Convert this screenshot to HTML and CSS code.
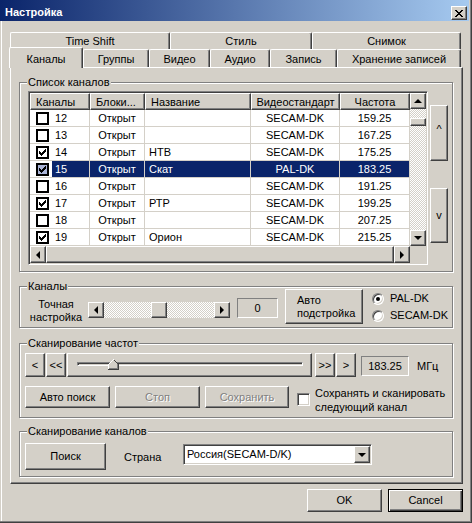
FILE: index.html
```html
<!DOCTYPE html>
<html lang="ru">
<head>
<meta charset="utf-8">
<title>Настройка</title>
<link rel="stylesheet" href="styles.css">
</head>
<body>
<div class="window">
  <div class="titlebar">
    <span class="title">Настройка</span>
    <span class="btn close"><svg width="8" height="7" viewBox="0 0 8 7" shape-rendering="crispEdges"><path d="M0 0h2v1H0zM6 0h2v1H6zM1 1h2v1H1zM5 1h2v1H5zM2 2h4v1H2zM3 3h2v1H3zM2 4h4v1H2zM1 5h2v1H1zM5 5h2v1H5zM0 6h2v1H0zM6 6h2v1H6z" fill="#000"/></svg></span>
  </div>

  <div class="tabs">
    <div class="tabrow back">
      <div class="tab t-ts">Time Shift</div>
      <div class="tab t-st">Стиль</div>
      <div class="tab t-sn">Снимок</div>
    </div>
    <div class="tabrow front">
      <div class="tab sel t-ch">Каналы</div>
      <div class="tab t-gr">Группы</div>
      <div class="tab t-vi">Видео</div>
      <div class="tab t-au">Аудио</div>
      <div class="tab t-za">Запись</div>
      <div class="tab t-hr">Хранение записей</div>
    </div>
  </div>

  <div class="panel">
    <div class="group g1">
      <div class="legend">Список каналов</div>
      <div class="g1row">
        <div class="list">
          <div class="list-in">
            <div class="table">
              <div class="thead">
                <div class="th">Каналы</div>
                <div class="th">Блоки...</div>
                <div class="th">Название</div>
                <div class="th ctr">Видеостандарт</div>
                <div class="th ctr">Частота</div>
              </div>
              <div class="tr"><div class="td c1"><span class="cb"></span><span class="num">12</span></div><div class="td ctr">Открыт</div><div class="td"></div><div class="td ctr">SECAM-DK</div><div class="td ctr">159.25</div></div>
              <div class="tr"><div class="td c1"><span class="cb"></span><span class="num">13</span></div><div class="td ctr">Открыт</div><div class="td"></div><div class="td ctr">SECAM-DK</div><div class="td ctr">167.25</div></div>
              <div class="tr"><div class="td c1"><span class="cb"><svg width="9" height="9" viewBox="0 0 9 9" shape-rendering="crispEdges"><path d="M7 1h1v1H7zM6 2h2v1H6zM1 3h1v1H1zM5 3h3v1H5zM1 4h2v1H1zM4 4h3v1H4zM1 5h5v1H1zM2 6h3v1H2zM3 7h1v1H3z" fill="#000"/></svg></span><span class="num">14</span></div><div class="td ctr">Открыт</div><div class="td">НТВ</div><div class="td ctr">SECAM-DK</div><div class="td ctr">175.25</div></div>
              <div class="tr sel"><div class="td c1"><span class="cb"><svg width="9" height="9" viewBox="0 0 9 9" shape-rendering="crispEdges"><path d="M7 1h1v1H7zM6 2h2v1H6zM1 3h1v1H1zM5 3h3v1H5zM1 4h2v1H1zM4 4h3v1H4zM1 5h5v1H1zM2 6h3v1H2zM3 7h1v1H3z" fill="#000"/></svg></span><span class="num">15</span></div><div class="td ctr">Открыт</div><div class="td">Скат</div><div class="td ctr">PAL-DK</div><div class="td ctr">183.25</div></div>
              <div class="tr"><div class="td c1"><span class="cb"></span><span class="num">16</span></div><div class="td ctr">Открыт</div><div class="td"></div><div class="td ctr">SECAM-DK</div><div class="td ctr">191.25</div></div>
              <div class="tr"><div class="td c1"><span class="cb"><svg width="9" height="9" viewBox="0 0 9 9" shape-rendering="crispEdges"><path d="M7 1h1v1H7zM6 2h2v1H6zM1 3h1v1H1zM5 3h3v1H5zM1 4h2v1H1zM4 4h3v1H4zM1 5h5v1H1zM2 6h3v1H2zM3 7h1v1H3z" fill="#000"/></svg></span><span class="num">17</span></div><div class="td ctr">Открыт</div><div class="td">РТР</div><div class="td ctr">SECAM-DK</div><div class="td ctr">199.25</div></div>
              <div class="tr"><div class="td c1"><span class="cb"></span><span class="num">18</span></div><div class="td ctr">Открыт</div><div class="td"></div><div class="td ctr">SECAM-DK</div><div class="td ctr">207.25</div></div>
              <div class="tr"><div class="td c1"><span class="cb"><svg width="9" height="9" viewBox="0 0 9 9" shape-rendering="crispEdges"><path d="M7 1h1v1H7zM6 2h2v1H6zM1 3h1v1H1zM5 3h3v1H5zM1 4h2v1H1zM4 4h3v1H4zM1 5h5v1H1zM2 6h3v1H2zM3 7h1v1H3z" fill="#000"/></svg></span><span class="num">19</span></div><div class="td ctr">Открыт</div><div class="td">Орион</div><div class="td ctr">SECAM-DK</div><div class="td ctr">215.25</div></div>
            </div>
            <div class="vscroll">
              <div class="btn sbtn"><span class="tri up"></span></div>
              <div class="vtrack"><div class="btn vthumb"></div></div>
              <div class="btn sbtn"><span class="tri down"></span></div>
            </div>
            <div class="hscroll">
              <div class="btn sbtn"><span class="tri left"></span></div>
              <div class="btn hthumb"></div>
              <div class="btn sbtn"><span class="tri right"></span></div>
            </div>
            <div class="corner"></div>
          </div>
        </div>
        <div class="sidebtns">
          <div class="btn side s-up">^</div>
          <div class="btn side s-down">v</div>
        </div>
      </div>
    </div>

    <div class="group g2">
      <div class="legend">Каналы</div>
      <div class="g2row">
        <div class="finelabel">Точная<br>настройка</div>
        <div class="fine">
          <div class="btn sbtn"><span class="tri left"></span></div>
          <div class="ftrack"><div class="btn fthumb"></div></div>
          <div class="btn sbtn"><span class="tri right"></span></div>
        </div>
        <div class="static zero">0</div>
        <div class="btn auto">Авто<br>подстройка</div>
        <div class="radios">
          <div class="ropt"><span class="radio on"></span><span>PAL-DK</span></div>
          <div class="ropt"><span class="radio"></span><span>SECAM-DK</span></div>
        </div>
      </div>
    </div>

    <div class="group g3">
      <div class="legend">Сканирование частот</div>
      <div class="g3row1">
        <div class="btn nav n1">&lt;</div>
        <div class="btn nav n2">&lt;&lt;</div>
        <div class="btn trackbar">
          <div class="channel"></div>
          <svg class="thumb" width="11" height="11" viewBox="0 0 11 11" shape-rendering="crispEdges">
            <path d="M5 0h1v1H5zM4 1h3v1H4zM3 2h5v1H3zM2 3h7v1H2zM1 4h9v1H1zM0 5h11v6H0z" fill="#d4d0c8"/>
            <path d="M5 0h1v1H5zM4 1h1v1H4zM3 2h1v1H3zM2 3h1v1H2zM1 4h1v1H1zM0 5h1v6H0z" fill="#fff"/>
            <path d="M6 1h1v1H6zM7 2h1v1H7zM8 3h1v1H8zM9 4h1v1H9zM10 5h1v6H10zM0 10h11v1H0z" fill="#404040"/>
            <path d="M9 5h1v5H9zM1 9h9v1H1z" fill="#808080"/>
          </svg>
        </div>
        <div class="btn nav n3">&gt;&gt;</div>
        <div class="btn nav n4">&gt;</div>
        <div class="static freq">183.25</div>
        <div class="mhz">МГц</div>
      </div>
      <div class="g3row2">
        <div class="btn act a1">Авто поиск</div>
        <div class="btn act a2 disabled">Стоп</div>
        <div class="btn act a3 disabled">Сохранить</div>
        <span class="chk"></span>
        <div class="chklabel">Сохранять и сканировать<br>следующий канал</div>
      </div>
    </div>

    <div class="group g4">
      <div class="legend">Сканирование каналов</div>
      <div class="g4row">
        <div class="btn search">Поиск</div>
        <div class="country">Страна</div>
        <div class="combo">
          <div class="combo-in">
            <span class="combo-text">Россия(SECAM-D/K)</span>
            <div class="btn cbtn"><span class="tri down"></span></div>
          </div>
        </div>
      </div>
    </div>
  </div>

  <div class="footer">
    <div class="btn fbtn">OK</div>
    <div class="btn fbtn cancel">Cancel</div>
  </div>
</div>
</body>
</html>
```

FILE: styles.css
```css
* { box-sizing: border-box; }
html, body { margin: 0; padding: 0; }
body {
  width: 472px; height: 523px; overflow: hidden;
  background: #d4d0c8;
  font-family: "Liberation Sans", Arial, sans-serif;
  font-size: 11px; color: #000;
}
.window {
  width: 472px; height: 523px;
  display: flex; flex-direction: column;
  border-right: 1px solid #404040; border-bottom: 1px solid #404040;
  box-shadow: inset -1px -1px #808080, inset 1px 0 #d4d0c8, inset 2px 0 #fff;
}

/* generic raised button */
.btn {
  background: #d4d0c8;
  border: 1px solid; border-color: #fff #404040 #404040 #fff;
  box-shadow: inset -1px -1px #808080;
  display: flex; align-items: center; justify-content: center;
  flex: none; line-height: 13px; white-space: nowrap;
}
.btn.disabled { color: #808080; text-shadow: 1px 1px #fff; }

/* title bar */
.titlebar {
  flex: none; height: 21px; margin-right: 2px;
  display: flex; justify-content: space-between; align-items: flex-start;
  background: linear-gradient(90deg, #0a246a 0%, #a6caf0 100%);
}
.title { margin: 6px 0 0 5px; color: #fff; font-weight: bold; line-height: 13px; }
.close { width: 16px; height: 14px; margin: 6px 2px 0 0; }

/* tabs */
.tabs { flex: none; margin: 11px 0 0 10px; }
.tabrow { display: flex; align-items: flex-start; }
.tabrow.back { height: 17px; }
.tabrow.front { height: 18px; }
.tab {
  flex: none; height: 100%;
  background: #d4d0c8;
  border-top: 1px solid #fff; border-left: 1px solid #fff; border-right: 1px solid #404040;
  box-shadow: inset -1px 0 #808080;
  border-radius: 2px 2px 0 0;
  display: flex; align-items: center; justify-content: center;
  white-space: nowrap;
}
.tabrow.front .tab { padding-top: 1px; }
.tab.sel { height: 21px; margin: -2px 0 0 -1px; padding-top: 0; position: relative; z-index: 1; }
.t-ts { width: 160px; } .t-st { width: 142px; } .t-sn { width: 149px; }
.t-ch { width: 74px; } .t-gr { width: 66px; } .t-vi { width: 61px; }
.t-au { width: 60px; } .t-za { width: 67px; } .t-hr { width: 124px; }

/* panel */
.panel {
  flex: none; margin-left: 10px; width: 453px; height: 417px;
  border-top: 1px solid #fff; border-left: 1px solid #fff;
  border-right: 1px solid #404040; border-bottom: 1px solid #404040;
  box-shadow: inset -1px -1px #808080;
  padding: 0 9px 0 8px;
  display: flex; flex-direction: column;
}

/* group boxes */
.group {
  flex: none;
  border: 1px solid #808080;
  box-shadow: inset 1px 1px #fff, 1px 1px #fff;
  display: flex; flex-direction: column;
}
.legend {
  align-self: flex-start; margin: -7px 0 0 7px; padding: 0 1px;
  height: 13px; line-height: 13px; background: #d4d0c8; white-space: nowrap;
}
.g1 { margin-top: 14px; height: 190px; }
.g2 { margin-top: 14px; height: 42px; }
.g3 { margin-top: 15px; height: 75px; }
.g4 { margin-top: 13px; height: 46px; }

/* channel list */
.g1row { display: flex; margin: 2px 0 0 8px; }
.list {
  width: 400px; height: 174px; padding: 1px;
  border: 1px solid; border-color: #808080 #fff #fff #808080;
  box-shadow: inset 1px 1px #404040, inset -1px -1px #d4d0c8;
}
.list-in {
  width: 396px; height: 170px; background: #fff;
  display: grid; grid-template-columns: 380px 16px; grid-template-rows: 153px 17px;
}
.table { overflow: hidden; background: #fff; }
.thead, .tr { display: grid; grid-template-columns: 60px 55px 106px 89px 70px; height: 17px; }
.th {
  background: #d4d0c8;
  border-top: 1px solid #fff; border-left: 1px solid #fff;
  border-right: 1px solid #404040; border-bottom: 1px solid #404040;
  box-shadow: inset -1px -1px #808080;
  padding: 1px 0 0 5px; line-height: 14px; white-space: nowrap; overflow: hidden;
}
.th.ctr { padding-left: 0; text-align: center; }
.td {
  border-right: 1px solid #d4d0c8; border-bottom: 1px solid #d4d0c8;
  padding: 1px 0 0 4px; line-height: 15px; white-space: nowrap; overflow: hidden;
}
.td.ctr { padding-left: 0; text-align: center; }
.td.c1 { display: flex; align-items: stretch; padding: 0 0 0 6px; }
.cb {
  flex: none; align-self: center; width: 13px; height: 13px;
  border: 2px solid #000; background: #fff; margin-right: 3px;
  display: block;
}
.cb svg { display: block; }
.num { flex: 1; padding: 1px 0 0 3px; line-height: 15px; }
.tr.sel .td:not(.c1), .tr.sel .num { background: #0a246a; color: #fff; }
.tr.sel .cb { background: #a9b3d6; }

.vscroll {
  display: flex; flex-direction: column;
  background: repeating-conic-gradient(#fff 0 25%, #d4d0c8 0 50%) 0 0 / 2px 2px;
}
.sbtn { width: 16px; height: 16px; }
.vtrack { flex: 1; }
.vthumb { width: 16px; height: 8px; margin-top: 9px; }
.hscroll { display: flex; background: #d4d0c8; }
.hscroll .sbtn { height: 17px; }
.hthumb { flex: 1; height: 17px; }
.corner { background: #d4d0c8; }

.tri { width: 0; height: 0; display: block; }
.tri.up { border-left: 4px solid transparent; border-right: 4px solid transparent; border-bottom: 4px solid #000; margin-top: -1px; }
.tri.down { border-left: 4px solid transparent; border-right: 4px solid transparent; border-top: 4px solid #000; }
.tri.left { border-top: 4px solid transparent; border-bottom: 4px solid transparent; border-right: 4px solid #000; }
.tri.right { border-top: 4px solid transparent; border-bottom: 4px solid transparent; border-left: 4px solid #000; }

.sidebtns { display: flex; flex-direction: column; margin-left: 2px; }
.side { width: 18px; }
.s-up { height: 56px; margin-top: 14px; padding-bottom: 8px; }
.s-down { height: 55px; margin-top: 27px; }

/* group 2 */
.g2row { display: flex; align-items: flex-start; margin-top: -4px; height: 34px; }
.finelabel { width: 60px; margin: 9px 0 0 6px; text-align: center; line-height: 13px; }
.fine { display: flex; width: 142px; height: 16px; margin: 13px 0 0 2px; }
.ftrack { flex: 1; background: repeating-conic-gradient(#fff 0 25%, #d4d0c8 0 50%) 0 0 / 2px 2px; }
.fthumb { width: 16px; height: 16px; margin-left: 47px; }
.static {
  border: 1px solid; border-color: #808080 #fff #fff #808080;
  text-align: center; flex: none;
}
.zero { width: 41px; height: 20px; line-height: 18px; margin: 9px 0 0 7px; }
.auto { width: 78px; height: 35px; margin-left: 7px; justify-content: flex-start; padding-left: 11px; white-space: normal; }
.radios { margin: 3px 0 0 9px; display: flex; flex-direction: column; gap: 4px; }
.ropt { display: flex; align-items: center; height: 13px; line-height: 13px; }
.radio {
  width: 12px; height: 12px; border-radius: 50%;
  border: 1px solid; border-color: #808080 #fff #fff #808080;
  box-shadow: inset 1px 1px #404040, inset -1px -1px #d4d0c8;
  background: #fff; margin-right: 6px;
  display: flex; align-items: center; justify-content: center;
}
.radio.on::after { content: ""; width: 4px; height: 4px; border-radius: 50%; background: #000; }

/* group 3 */
.g3row1 { display: flex; align-items: flex-start; margin-top: 3px; height: 24px; }
.nav { width: 20px; height: 24px; margin-left: 1px; }
.n1 { margin-left: 5px; }
.n3 { margin-left: 3px; }
.trackbar { width: 245px; height: 24px; margin-left: 1px; position: relative; display: block; }
.channel {
  width: 226px; height: 4px; margin: 8px 0 0 9px;
  border: 1px solid; border-color: #808080 #fff #fff #808080;
  box-shadow: inset 1px 1px #404040; background: #d4d0c8;
}
.thumb { position: absolute; left: 40px; top: 5px; display: block; }
.freq { width: 48px; height: 20px; line-height: 18px; margin: 3px 0 0 5px; }
.mhz { margin: 7px 0 0 8px; line-height: 13px; }
.g3row2 { display: flex; align-items: flex-start; margin-top: 9px; }
.act { height: 22px; margin-left: 5px; }
.a1 { width: 85px; } .a2 { width: 85px; } .a3 { width: 84px; }
.chk {
  flex: none; width: 13px; height: 13px; margin: 7px 0 0 8px;
  border: 1px solid; border-color: #808080 #fff #fff #808080;
  box-shadow: inset 1px 1px #404040, inset -1px -1px #d4d0c8;
  background: #fff;
}
.chklabel { margin-left: 5px; line-height: 14px; white-space: nowrap; }

/* group 4 */
.g4row { display: flex; align-items: flex-start; margin-top: 5px; }
.search { width: 81px; height: 27px; margin-left: 5px; }
.country { width: 59px; margin: 8px 0 0 18px; line-height: 13px; }
.combo {
  width: 189px; height: 21px; margin-top: 1px; padding: 1px;
  border: 1px solid; border-color: #808080 #fff #fff #808080;
  box-shadow: inset 1px 1px #404040, inset -1px -1px #d4d0c8;
}
.combo-in { display: flex; height: 17px; background: #fff; }
.combo-text { flex: 1; padding-left: 2px; line-height: 17px; white-space: nowrap; }
.cbtn { width: 16px; height: 17px; }

/* footer */
.footer { flex: none; display: flex; gap: 6px; margin: 5px 0 0 307px; }
.fbtn { width: 75px; height: 23px; }
.cancel {
  border: 1px solid #000;
  box-shadow: inset 1px 1px #fff, inset -1px -1px #404040, inset -2px -2px #808080;
}
```
